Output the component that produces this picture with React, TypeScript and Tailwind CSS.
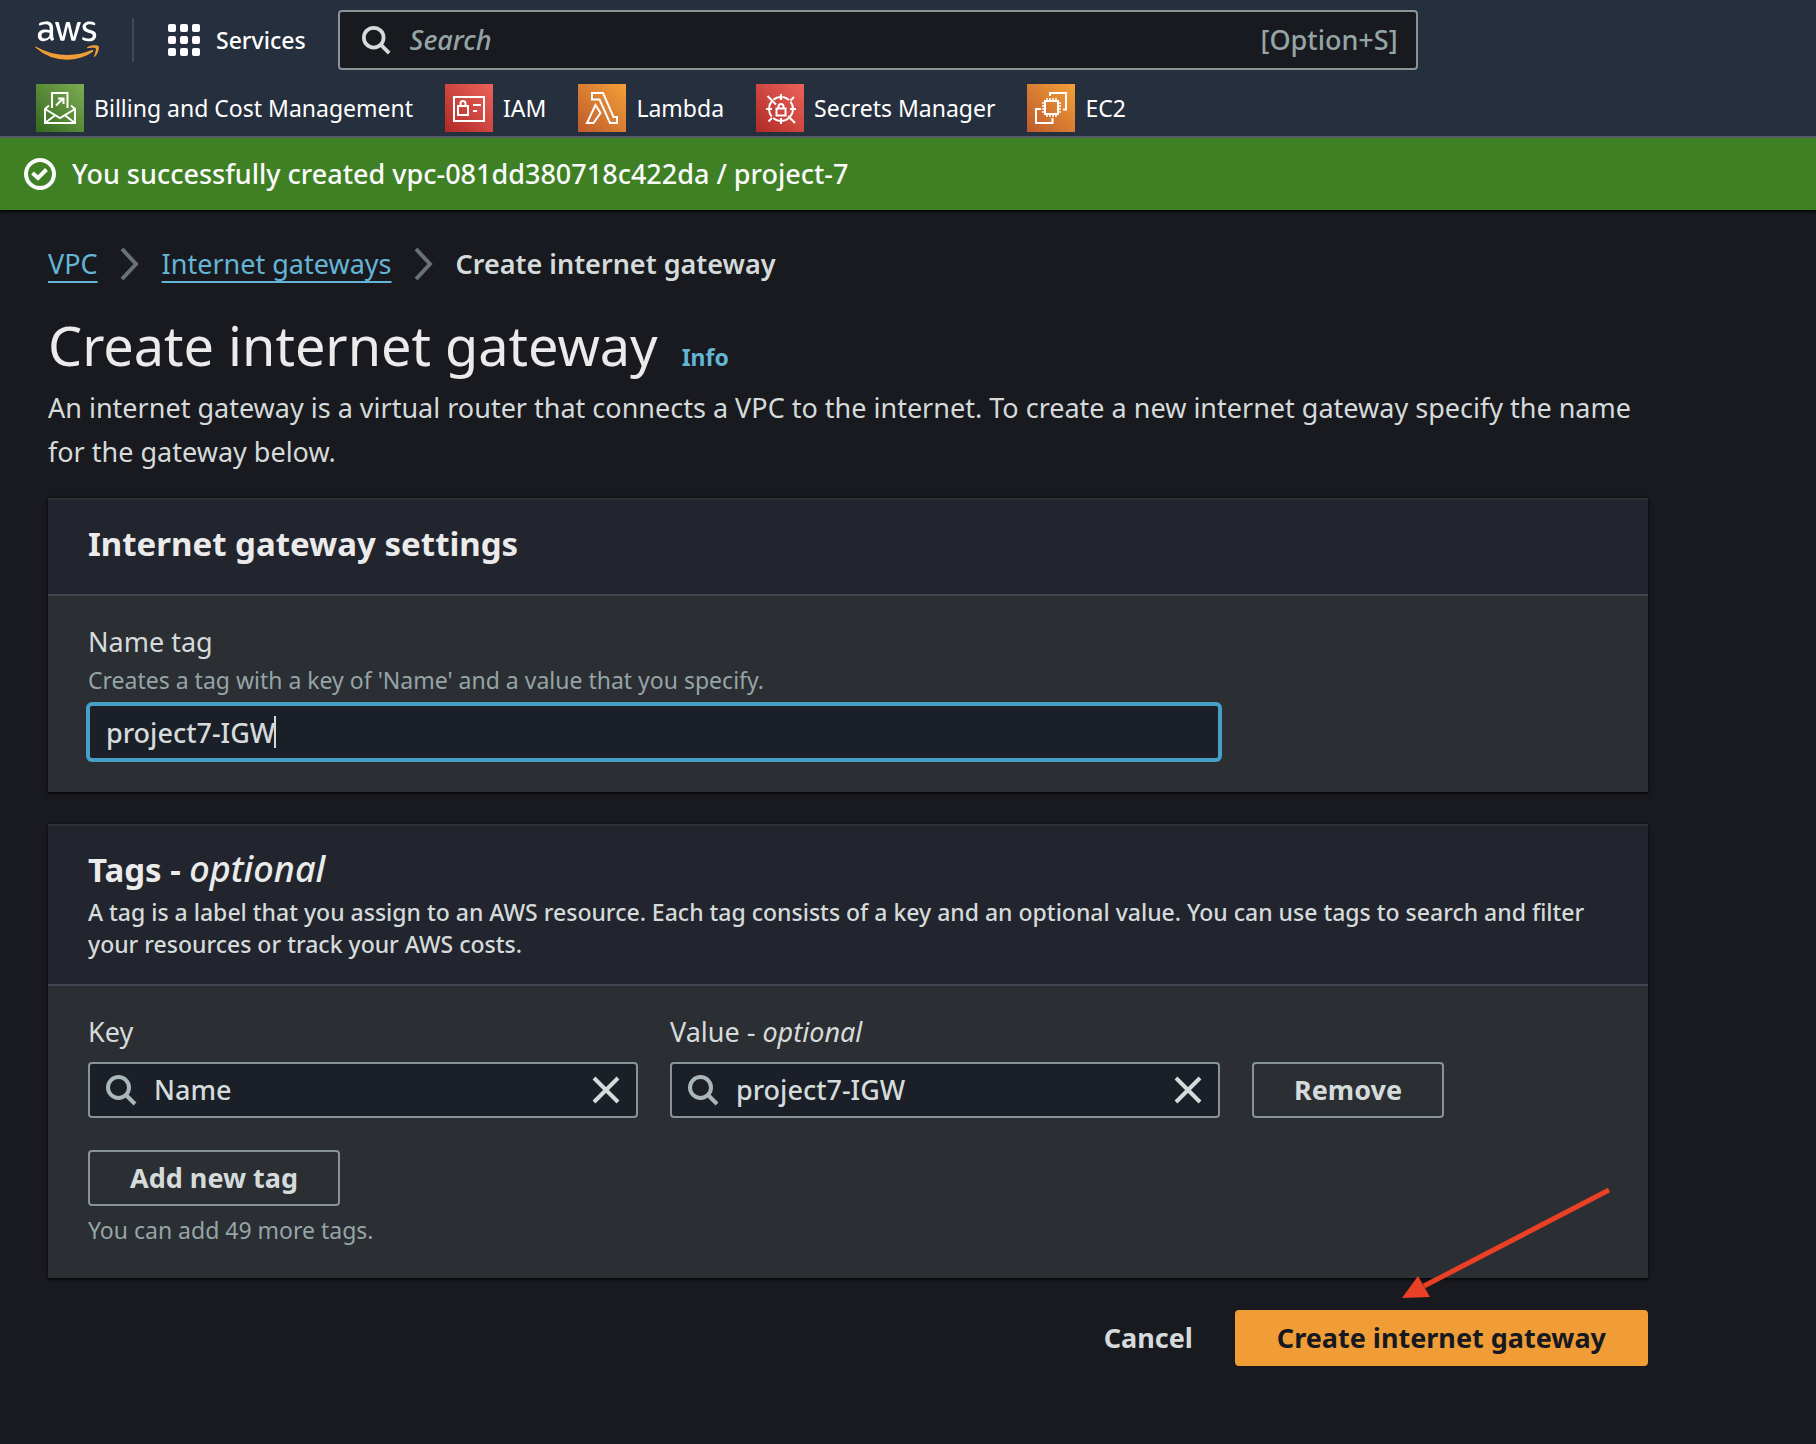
import type { ReactNode } from "react";
import { FaAws } from "react-icons/fa";

function AwsLogo() {
  return (
    <a href="#home" aria-label="AWS" className="block">
      <svg width="0" height="0" className="absolute" aria-hidden="true">
        <defs>
          <linearGradient id="aws-fill" x1="0" y1="0" x2="0" y2="1">
            <stop offset="0.58" stopColor="#ffffff" />
            <stop offset="0.58" stopColor="#f09d38" />
          </linearGradient>
        </defs>
      </svg>
      <FaAws className="h-[51px] w-16" fill="url(#aws-fill)" />
    </a>
  );
}

function GridIcon() {
  return (
    <svg viewBox="0 0 32 32" className="size-8" fill="#fff" aria-hidden="true">
      {[0, 12, 24].map((y) =>
        [0, 12, 24].map((x) => <rect key={`${x}-${y}`} x={x} y={y} width="8" height="8" rx="2" />),
      )}
    </svg>
  );
}

function SearchIcon({ className }: { className: string }) {
  return (
    <svg viewBox="0 0 32 32" className={className} fill="none" stroke="currentColor" strokeWidth="4" aria-hidden="true">
      <circle cx="12.500" cy="13.500" r="10.500" />
      <path d="M20 21l9 9" />
    </svg>
  );
}

function CloseIcon() {
  return (
    <svg viewBox="0 0 32 32" className="size-8" fill="none" stroke="currentColor" strokeWidth="4" aria-hidden="true">
      <path d="M4 4l24 24M28 4L4 28" />
    </svg>
  );
}

function Chevron() {
  return (
    <svg viewBox="0 0 20 32" className="h-8 w-5 shrink-0" fill="none" stroke="#687078" strokeWidth="4" aria-hidden="true">
      <path d="M2 1l14 15L2 31" />
    </svg>
  );
}

function ServiceIcon({ className, children }: { className: string; children: ReactNode }) {
  return (
    <span className={`block size-12 shrink-0 bg-linear-to-tr ${className}`}>
      <svg viewBox="0 0 48 48" className="size-12" fill="none" stroke="#fff" strokeWidth="2" aria-hidden="true">
        {children}
      </svg>
    </span>
  );
}

const green = "from-[#33691f] to-[#7dad52]";
const red = "from-[#b02924] to-[#ec625b]";
const orange = "from-[#bd5a2c] to-[#f3a137]";

const favorites = [
  {
    name: "Billing and Cost Management",
    color: green,
    icon: (
      <>
        <path d="M16 24V9h15.500v15" />
        <path d="M20 21.500l7.500-7.500M22 14.500h5.500V20" />
        <path d="M13 21.500L9 25v14h30V25l-4-3.500M9 25l15 9 15-9M9 39l10.500-8M39 39l-10.500-8" />
      </>
    ),
  },
  {
    name: "IAM",
    color: red,
    icon: (
      <>
        <rect x="9" y="13" width="30" height="24" />
        <rect x="13" y="22" width="10" height="9" />
        <path d="M15.500 22v-2.500a2.500 2.500 0 0 1 5 0V22M28 21h8M28 27h4" />
      </>
    ),
  },
  {
    name: "Lambda",
    color: orange,
    icon: (
      <>
        <path d="M14 9h11l10.500 24H39v6h-7L21.500 15.500H14z" />
        <path d="M17.500 21L9 39h6.500l7-10z" />
      </>
    ),
  },
  {
    name: "Secrets Manager",
    color: red,
    icon: (
      <>
        <circle cx="25" cy="25" r="12" strokeDasharray="7.425 2" strokeDashoffset="-1" />
        <path d="M25 10v6M25 34v6M10 25h6M34 25h6M11.500 12l8.500 8.500M32 32l7 7M38 13l-3.500 3.500M12.500 37.500L16 34" />
        <rect x="20.500" y="24.500" width="9" height="7" />
        <path d="M22.500 24.500v-2a2.500 2.500 0 0 1 5 0v2" />
      </>
    ),
  },
  {
    name: "EC2",
    color: orange,
    icon: (
      <>
        <rect x="18" y="17" width="13" height="13" />
        <path d="M20 14v3M23 14v3M26 14v3M29 14v3M20 30v3M23 30v3M26 30v3M29 30v3M15 19h3M15 22h3M15 25h3M15 28h3M31 19h3M31 22h3M31 25h3M31 28h3" strokeWidth="1.500" />
        <path d="M23 12V9h16v16.500h-3M14 25H9v14h16.500v-5" />
      </>
    ),
  },
];

function Header() {
  return (
    <header className="border-b-2 border-[#545b64] bg-[#262f3e] pt-2.5 pb-1 text-[23px] leading-8 text-white">
      <div className="flex items-center pr-9 pl-[35px]">
        <AwsLogo />
        <span className="ml-[33px] h-11 w-0.5 bg-[#414750]" />
        <button type="button" className="ml-[34px] flex items-center gap-4 font-medium">
          <GridIcon />
          Services
        </button>
        <div className="ml-8 flex h-15 max-w-[1080px] flex-1 items-center rounded border-2 border-[#879596] bg-[#191a1f] px-[18px]">
          <SearchIcon className="ml-1 size-[30px] text-[#d5dbdb]" />
          <input
            type="search"
            aria-label="Search"
            placeholder="Search"
            className="ml-[18px] min-w-0 flex-1 bg-transparent text-[27px] leading-10 font-medium outline-none placeholder:text-[#95a5a6] placeholder:italic"
          />
          <span className="text-[27px] leading-10 font-medium text-[#95a5a6]">[Option+S]</span>
        </div>
      </div>
      <nav aria-label="Favorites" className="mt-3.5 flex flex-wrap gap-x-8 px-9">
        {favorites.map((f) => (
          <a key={f.name} href="#service" className="flex items-center gap-2.5">
            <ServiceIcon className={f.color}>{f.icon}</ServiceIcon>
            {f.name}
          </a>
        ))}
      </nav>
    </header>
  );
}

function Panel({ title, description, children }: { title: ReactNode; description?: string; children: ReactNode }) {
  return (
    <section className="border-t-2 border-[#2c2f34] bg-[#2b2e33] shadow-[0_2px_2px_rgba(0,0,0,0.6),0_0_3px_rgba(0,0,0,0.5)]">
      <div className="border-b-2 border-[#414550] bg-[#22252d] px-10 pt-[22px] pb-6">
        <h2 className="mb-1 text-[33px] leading-11 font-bold text-[#ebebeb]">{title}</h2>
        {description && <p className="text-[23px] leading-8 font-medium">{description}</p>}
      </div>
      <div className="px-10 pt-6 pb-8">{children}</div>
    </section>
  );
}

function TagField({ id, label, value }: { id: string; label: ReactNode; value: string }) {
  return (
    <div className="col-span-3">
      <label htmlFor={id} className="block leading-11">
        {label}
      </label>
      <div className="mt-2 flex h-14 items-center rounded border-2 border-[#879596] bg-[#1b1f28] pr-3.5 pl-4">
        <SearchIcon className="size-8 shrink-0 text-[#aab7b8]" />
        <input id={id} defaultValue={value} className="ml-4 min-w-0 flex-1 bg-transparent leading-10 font-medium outline-none" />
        <button type="button" aria-label="Clear">
          <CloseIcon />
        </button>
      </div>
    </div>
  );
}

const outlined = "h-14 rounded border-2 border-[#879596] px-10 font-bold";

export default function App() {
  return (
    <div className="min-h-screen bg-[#191a1f] font-['Noto_Sans',sans-serif] text-[27px] leading-11 text-[#d5dbdb]">
      <Header />
      <div role="status" className="flex items-center gap-4 bg-[#3f8024] px-6 py-4 leading-10 font-medium text-[#fafafa] shadow-[0_2px_2px_rgba(0,0,0,0.7)]">
        <svg viewBox="0 0 32 32" className="size-8 shrink-0" fill="none" stroke="currentColor" strokeWidth="4" aria-hidden="true">
          <circle cx="16" cy="16" r="14" />
          <path d="M8.500 15l5.500 5 8.500-8.500" />
        </svg>
        <p>You successfully created vpc-081dd380718c422da / project-7</p>
      </div>

      <main className="max-w-[1696px] px-12 pt-8 pb-12">
        <nav aria-label="Breadcrumb" className="flex items-center gap-[22px]">
          <a href="#vpc" className="text-[#64b5d5] underline decoration-2 underline-offset-[7px] [text-decoration-skip-ink:none]">
            VPC
          </a>
          <Chevron />
          <a href="#gateways" className="text-[#64b5d5] underline decoration-2 underline-offset-[7px] [text-decoration-skip-ink:none]">
            Internet gateways
          </a>
          <Chevron />
          <span className="font-semibold">Create internet gateway</span>
        </nav>

        <div className="mt-6 flex items-baseline gap-6">
          <h1 className="text-[54px] leading-[70px] text-[#ebebeb]">Create internet gateway</h1>
          <a href="#info" className="text-[23px] leading-8 font-bold text-[#64b5d5]">
            Info
          </a>
        </div>
        <p className="mt-1.5">
          An internet gateway is a virtual router that connects a VPC to the internet. To create a new internet gateway specify the name for the gateway below.
        </p>

        <form className="mt-6">
          <div className="flex flex-col gap-8">
            <Panel title="Internet gateway settings">
              <div className="grid grid-cols-8 gap-8">
                <div className="col-span-6">
                  <label htmlFor="name-tag" className="block leading-11">
                    Name tag
                  </label>
                  <p id="name-tag-hint" className="text-[23px] leading-8 text-[#95a5a6]">
                    Creates a tag with a key of 'Name' and a value that you specify.
                  </p>
                  <div className="relative mt-2">
                    <input
                      id="name-tag"
                      aria-describedby="name-tag-hint"
                      defaultValue="project7-IGW"
                      className="block h-14 w-full rounded border-2 border-[#479fc8] bg-[#1b1f28] px-4 leading-10 font-medium ring-2 ring-[#479fc8] outline-none"
                    />
                    <span className="absolute top-3 left-[186px] h-8 w-0.5 bg-[#d5dbdb]" />
                  </div>
                </div>
              </div>
            </Panel>

            <Panel
              title={
                <>
                  Tags - <i className="text-[36px] leading-none font-medium">optional</i>
                </>
              }
              description="A tag is a label that you assign to an AWS resource. Each tag consists of a key and an optional value. You can use tags to search and filter your resources or track your AWS costs."
            >
              <div className="grid grid-cols-8 items-end gap-8">
                <TagField id="tag-key" label="Key" value="Name" />
                <TagField
                  id="tag-value"
                  label={
                    <>
                      Value - <i>optional</i>
                    </>
                  }
                  value="project7-IGW"
                />
                <div className="col-span-2">
                  <button type="button" className={`block ${outlined}`}>
                    Remove
                  </button>
                </div>
              </div>
              <button type="button" className={`mt-8 block ${outlined}`}>
                Add new tag
              </button>
              <p className="mt-2 text-[23px] leading-8 text-[#95a5a6]">You can add 49 more tags.</p>
            </Panel>
          </div>

          <div className="relative mt-8 flex justify-end font-bold">
            <svg viewBox="0 0 212 116" className="pointer-events-none absolute right-9 bottom-16 h-29 w-53" aria-hidden="true">
              <path d="M209 4L24 100" stroke="#ea4025" strokeWidth="5" />
              <path d="M2 112L18 90l12 21z" fill="#ea4025" />
            </svg>
            <button type="button" className="h-14 px-[42px]">
              Cancel
            </button>
            <button type="submit" className="h-14 rounded bg-[#f09d38] px-[42px] text-[#16191f]">
              Create internet gateway
            </button>
          </div>
        </form>
      </main>
    </div>
  );
}
